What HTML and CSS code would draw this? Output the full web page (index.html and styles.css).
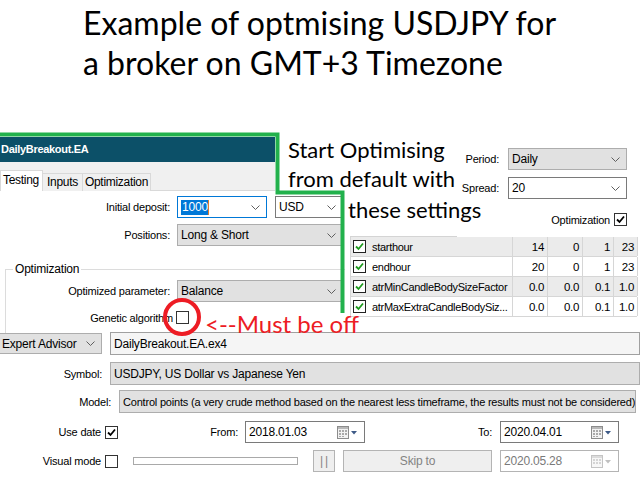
FILE: index.html
```html
<!DOCTYPE html>
<html>
<head>
<meta charset="utf-8">
<link rel="stylesheet" href="styles.css">
</head>
<body>
<div class="page">
  <h1 class="title"><span class="tline">Example of optmising USDJPY for</span><span class="tline">a broker on GMT+3 Timezone</span></h1>

  <div class="tester">
    <section class="left">
      <div class="caption">DailyBreakout.EA</div>
      <div class="tabs">
        <span class="tab active t1">Testing</span>
        <span class="tab t2">Inputs</span>
        <span class="tab t3">Optimization</span>
      </div>
      <div class="form">
        <div class="row">
          <span class="lbl">Initial deposit:</span>
          <div class="combo white focus w90"><span class="sel">1000</span><svg class="chev" viewBox="0 0 9 5" width="9" height="5"><path d="M0.5 0.5 L4.5 4.5 L8.5 0.5"/></svg></div>
          <div class="combo white w68 ml8"><span>USD</span><svg class="chev" viewBox="0 0 9 5" width="9" height="5"><path d="M0.5 0.5 L4.5 4.5 L8.5 0.5"/></svg></div>
        </div>
        <div class="row mt6">
          <span class="lbl">Positions:</span>
          <div class="combo w166"><span>Long &amp; Short</span><svg class="chev" viewBox="0 0 9 5" width="9" height="5"><path d="M0.5 0.5 L4.5 4.5 L8.5 0.5"/></svg></div>
        </div>
        <div class="group">
          <div class="legend">Optimization</div>
          <div class="row grow">
            <span class="lbl glbl">Optimized parameter:</span>
            <div class="combo w166"><span>Balance</span><svg class="chev" viewBox="0 0 9 5" width="9" height="5"><path d="M0.5 0.5 L4.5 4.5 L8.5 0.5"/></svg></div>
          </div>
          <div class="row ckrow">
            <span class="lbl galbl">Genetic algorithm</span>
            <span class="ck"></span>
          </div>
        </div>
      </div>
    </section>

    <section class="right">
      <div class="prow">
        <span class="plbl">Period:</span>
        <div class="combo w119"><span>Daily</span><svg class="chev" viewBox="0 0 9 5" width="9" height="5"><path d="M0.5 0.5 L4.5 4.5 L8.5 0.5"/></svg></div>
      </div>
      <div class="prow mt7">
        <span class="plbl">Spread:</span>
        <div class="combo white w119"><span>20</span><svg class="chev" viewBox="0 0 9 5" width="9" height="5"><path d="M0.5 0.5 L4.5 4.5 L8.5 0.5"/></svg></div>
      </div>
      <div class="prow optrow">
        <span class="olbl">Optimization</span>
        <span class="ck"><svg viewBox="0 0 11 11" width="11" height="11"><path class="tick" d="M2 5.5 L4.5 8 L9 2.5"/></svg></span>
      </div>
      <div class="params">
        <div class="phead"></div>
        <div class="prm odd">
          <div class="c name"><span class="ck gck"><svg viewBox="0 0 11 11" width="11" height="11"><path class="gtick" d="M2 5.5 L4.5 8 L9 2.5"/></svg></span><span>starthour</span></div>
          <div class="c num">14</div><div class="c num">0</div><div class="c num">1</div><div class="c num">23</div>
        </div>
        <div class="prm">
          <div class="c name"><span class="ck gck"><svg viewBox="0 0 11 11" width="11" height="11"><path class="gtick" d="M2 5.5 L4.5 8 L9 2.5"/></svg></span><span>endhour</span></div>
          <div class="c num">20</div><div class="c num">0</div><div class="c num">1</div><div class="c num">23</div>
        </div>
        <div class="prm odd">
          <div class="c name"><span class="ck gck"><svg viewBox="0 0 11 11" width="11" height="11"><path class="gtick" d="M2 5.5 L4.5 8 L9 2.5"/></svg></span><span>atrMinCandleBodySizeFactor</span></div>
          <div class="c num">0.0</div><div class="c num">0.0</div><div class="c num">0.1</div><div class="c num">1.0</div>
        </div>
        <div class="prm">
          <div class="c name"><span class="ck gck"><svg viewBox="0 0 11 11" width="11" height="11"><path class="gtick" d="M2 5.5 L4.5 8 L9 2.5"/></svg></span><span>atrMaxExtraCandleBodySiz...</span></div>
          <div class="c num">0.0</div><div class="c num">0.0</div><div class="c num">0.1</div><div class="c num">1.0</div>
        </div>
      </div>
    </section>
  </div>

  <div class="bottom">
    <div class="brow h23">
      <div class="combo eacombo"><span>Expert Advisor</span><svg class="chev" viewBox="0 0 9 5" width="9" height="5"><path d="M0.5 0.5 L4.5 4.5 L8.5 0.5"/></svg></div>
      <div class="field eafield">DailyBreakout.EA.ex4</div>
    </div>
    <div class="brow h23 mt7">
      <span class="blbl">Symbol:</span>
      <div class="field gray wide">USDJPY, US Dollar vs Japanese Yen</div>
    </div>
    <div class="brow h23 mt5">
      <span class="blbl">Model:</span>
      <div class="field gray model">Control points (a very crude method based on the nearest less timeframe, the results must not be considered)</div>
    </div>
    <div class="brow h22 mt8">
      <div class="cklbl"><span>Use date</span><span class="ck"><svg viewBox="0 0 11 11" width="11" height="11"><path class="tick" d="M2 5.5 L4.5 8 L9 2.5"/></svg></span></div>
      <span class="dlbl from">From:</span>
      <div class="date w120"><span>2018.01.03</span>
        <svg class="cal" viewBox="0 0 21 13" width="21" height="13"><rect x="0.5" y="0.5" width="11" height="12" fill="#f2f2f2" stroke="#8c8c8c"/><rect x="1" y="1" width="10" height="2" fill="#b8b8b8"/><g fill="#a9a9a9"><rect x="2" y="4" width="2" height="2"/><rect x="5" y="4" width="2" height="2"/><rect x="8" y="4" width="2" height="2"/><rect x="2" y="7" width="2" height="2"/><rect x="5" y="7" width="2" height="2"/><rect x="8" y="7" width="2" height="2"/><rect x="2" y="10" width="2" height="1"/><rect x="5" y="10" width="2" height="1"/></g><path d="M14 5 H20 L17 8.5 Z" fill="#3d5a87"/></svg>
      </div>
      <span class="dlbl to">To:</span>
      <div class="date w119"><span>2020.04.01</span>
        <svg class="cal" viewBox="0 0 21 13" width="21" height="13"><rect x="0.5" y="0.5" width="11" height="12" fill="#f2f2f2" stroke="#8c8c8c"/><rect x="1" y="1" width="10" height="2" fill="#b8b8b8"/><g fill="#a9a9a9"><rect x="2" y="4" width="2" height="2"/><rect x="5" y="4" width="2" height="2"/><rect x="8" y="4" width="2" height="2"/><rect x="2" y="7" width="2" height="2"/><rect x="5" y="7" width="2" height="2"/><rect x="8" y="7" width="2" height="2"/><rect x="2" y="10" width="2" height="1"/><rect x="5" y="10" width="2" height="1"/></g><path d="M14 5 H20 L17 8.5 Z" fill="#3d5a87"/></svg>
      </div>
    </div>
    <div class="brow h22 mt7">
      <div class="cklbl"><span>Visual mode</span><span class="ck"></span></div>
      <div class="track"></div>
      <div class="btn pause">||</div>
      <div class="btn skip">Skip to</div>
      <div class="date w119 disabled"><span>2020.05.28</span>
        <svg class="cal" viewBox="0 0 21 13" width="21" height="13"><rect x="0.5" y="0.5" width="11" height="12" fill="#f7f7f7" stroke="#c4c4c4"/><rect x="1" y="1" width="10" height="2" fill="#dcdcdc"/><g fill="#d4d4d4"><rect x="2" y="4" width="2" height="2"/><rect x="5" y="4" width="2" height="2"/><rect x="8" y="4" width="2" height="2"/><rect x="2" y="7" width="2" height="2"/><rect x="5" y="7" width="2" height="2"/><rect x="8" y="7" width="2" height="2"/></g><path d="M14 5 H20 L17 8.5 Z" fill="#c0c0c0"/></svg>
      </div>
    </div>
  </div>

  <svg class="overlay" viewBox="0 0 640 480" width="640" height="480">
    <polyline points="0,134.5 277.5,134.5 277.5,192.5 342.5,192.5 342.5,313" fill="none" stroke="#22b14c" stroke-width="4"/>
    <circle cx="182" cy="317" r="17" fill="none" stroke="#ed1c24" stroke-width="4"/>
  </svg>

  <div class="note green-note">
    <div>Start Optimising</div>
    <div>from default with</div>
    <div class="indent">these settings</div>
  </div>
  <div class="note red-note">&lt;--Must be off</div>
</div>
</body>
</html>
```

FILE: styles.css
```css
* { box-sizing: border-box; }
body { margin: 0; }

.page {
  position: relative;
  width: 640px;
  height: 480px;
  overflow: hidden;
  background: #fff;
  color: #000;
  font-family: "Liberation Sans", Arial, sans-serif;
  font-size: 11px;
  letter-spacing: -0.2px;
}

.title {
  margin: 0;
  padding: 3px 0 0 83px;
  font-family: Lato, "Open Sans", sans-serif;
  font-weight: normal;
  font-size: 32px;
  letter-spacing: 0;
  line-height: 40px;
  height: 83px;
}
.tline { display: block; white-space: nowrap; }

.tester {
  display: grid;
  grid-template-columns: 345px 295px;
  height: 195px;
  margin-top: 54px;
}

.caption {
  width: 275px;
  height: 25px;
  background: #0c5068;
  color: #fff;
  font-weight: bold;
  font-size: 11px;
  letter-spacing: -0.3px;
  line-height: 25px;
  padding-left: 1px;
  white-space: nowrap;
}
.tabs {
  width: 275px;
  height: 29px;
  background: #f0f0f0;
  border-bottom: 1px solid #d9d9d9;
  display: flex;
  align-items: flex-end;
}
.tab {
  height: 18px;
  line-height: 17px;
  border: 1px solid #d9d9d9;
  border-bottom: none;
  margin-left: -1px;
  margin-bottom: -1px;
  background: #f0f0f0;
  white-space: nowrap;
  text-align: center;
  font-size: 12px;
  letter-spacing: -0.3px;
}
.tab.active {
  height: 21px;
  line-height: 19px;
  margin-left: 0;
  text-align: left;
  padding-left: 2px;
  background: #fff;
  position: relative;
}
.t1 { width: 43px; }
.t2 { width: 41px; }
.t3 { width: 69px; }

.form { padding-top: 5px; }
.row { display: flex; align-items: center; height: 22px; }
.lbl {
  width: 177px;
  padding-right: 7px;
  text-align: right;
  white-space: nowrap;
}
.mt5 { margin-top: 5px; }
.mt6 { margin-top: 6px; }
.mt7 { margin-top: 7px; }
.mt8 { margin-top: 8px; }
.ml8 { margin-left: 8px; }

.combo {
  height: 22px;
  border: 1px solid #adadad;
  background: #e1e1e1;
  display: flex;
  align-items: center;
  justify-content: space-between;
  padding: 0 6px 0 3px;
  white-space: nowrap;
  overflow: hidden;
  font-size: 12px;
}
.combo.white { background: #fff; border-color: #7a7a7a; }
.combo.focus { border-color: #0078d7; }
.w68 { width: 68px; }
.w90 { width: 90px; }
.w119 { width: 119px; }
.w120 { width: 120px; }
.w166 { width: 166px; }
.chev { flex: none; }
.chev path { fill: none; stroke: #5f5f5f; stroke-width: 1; }
.sel {
  background: #0078d7;
  color: #fff;
  padding: 0 0 0 1px;
  line-height: 15px;
  border-right: 1px solid #e07b2a;
}

.group {
  margin: 23px 0 0 5px;
  border-top: 1px solid #dcdcdc;
  border-left: 1px solid #dcdcdc;
  padding-bottom: 9px;
}
.legend {
  width: max-content;
  margin: -8px 0 0 7px;
  padding: 0 2px;
  background: #fff;
  line-height: 14px;
  font-size: 12px;
}
.grow { margin-top: 4px; }
.glbl { width: 171px; }
.ckrow { height: 13px; margin-top: 9px; }
.galbl { width: 170px; padding-right: 3px; }

.ck {
  flex: none;
  display: inline-flex;
  align-items: center;
  justify-content: center;
  width: 13px;
  height: 13px;
  border: 1px solid #333;
  background: #fff;
}
.tick { fill: none; stroke: #000; stroke-width: 1.8; }
.gtick { fill: none; stroke: #1d9a1d; stroke-width: 1.8; }

.right { padding-top: 11px; }
.prow {
  display: flex;
  justify-content: flex-end;
  align-items: center;
  height: 22px;
  padding-right: 13px;
}
.plbl { margin-right: 9px; }
.optrow { height: 13px; margin-top: 14px; }
.olbl { margin-right: 4px; }

.params { margin: 10px 0 0 5px; width: 287px; }
.phead { width: 107px; height: 1px; background: #d4d4d4; }
.prm {
  display: grid;
  grid-template-columns: 162px 35px 35px 31px 24px;
  height: 20px;
  border-left: 1px solid #d6d6d6;
  border-bottom: 1px solid #d6d6d6;
  background: #fff;
  font-size: 11.5px;
  letter-spacing: -0.3px;
}
.prm.odd { background: #ebebeb; }
.c {
  border-right: 1px solid #d6d6d6;
  display: flex;
  align-items: center;
  white-space: nowrap;
  overflow: hidden;
}
.name { padding-left: 2px; gap: 6px; font-size: 11px; }
.num { justify-content: flex-end; padding-right: 3px; }
.gck { border-color: #222; }

.brow { display: flex; align-items: center; }
.h22 { height: 22px; }
.h23 { height: 23px; }
.eacombo { width: 113px; height: 21px; margin-left: -2px; margin-right: 8px; }
.field {
  height: 23px;
  border: 1px solid #a0a0a0;
  background: #fff;
  display: flex;
  align-items: center;
  padding-left: 3px;
  white-space: nowrap;
  overflow: hidden;
  flex: none;
  font-size: 12px;
}
.eafield { width: 530px; background: #f5f5f5; }
.field.gray { background: #e1e1e1; border-color: #adadad; }
.wide { width: 530px; }
.model { width: 517px; font-size: 11px; }
.blbl { width: 119px; padding-right: 8px; text-align: right; }

.cklbl {
  width: 118px;
  display: flex;
  justify-content: flex-end;
  align-items: center;
  gap: 4px;
}
.dlbl { text-align: right; }
.from { width: 127px; padding-right: 7px; }
.to { width: 135px; padding-right: 8px; }
.date {
  height: 22px;
  border: 1px solid #7a7a7a;
  background: #fff;
  display: flex;
  align-items: center;
  justify-content: space-between;
  padding: 0 6px 0 3px;
  flex: none;
  font-size: 12px;
}
.date.disabled { border-color: #b4b4b4; color: #7a7a7a; }
.cal { flex: none; }

.track {
  width: 165px;
  height: 8px;
  margin-left: 15px;
  border: 1px solid #a9a9a9;
  background: #fff;
}
.btn {
  height: 22px;
  border: 1px solid #b4b4b4;
  background: #efefef;
  color: #838383;
  display: flex;
  align-items: center;
  justify-content: center;
  flex: none;
  font-size: 12px;
}
.pause { width: 22px; margin-left: 15px; letter-spacing: 2px; padding-left: 2px; }
.skip { width: 149px; margin-left: 8px; margin-right: 8px; }

.overlay {
  position: absolute;
  left: 0;
  top: 0;
  pointer-events: none;
}
.note {
  position: absolute;
  font-family: Lato, "Open Sans", sans-serif;
  letter-spacing: 0;
  line-height: 29px;
  white-space: nowrap;
}
.green-note { left: 288px; top: 135px; color: #000; font-size: 22px; }
.green-note .indent { margin-left: 60px; margin-top: 2px; }
.red-note { left: 205px; top: 309px; color: #ed1c24; font-size: 24px; }
```
